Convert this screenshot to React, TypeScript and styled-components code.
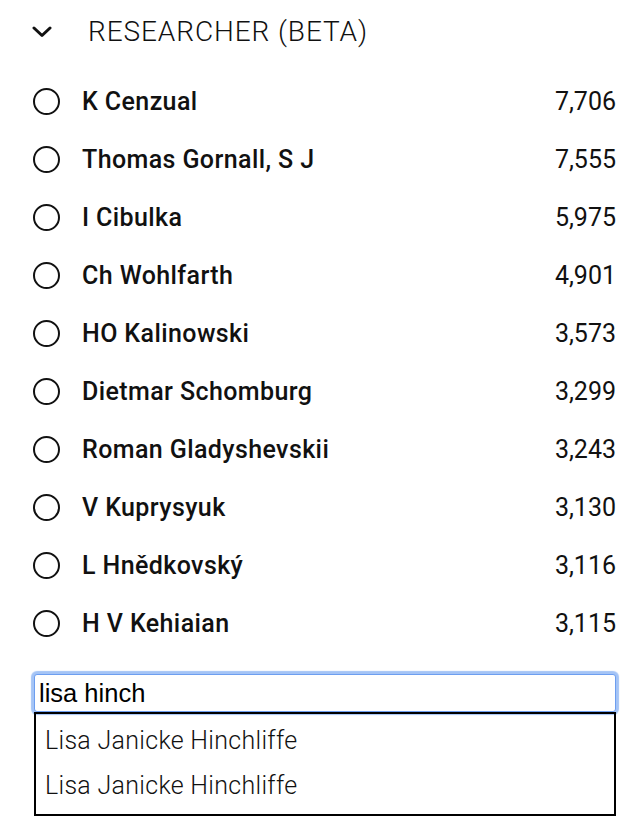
import React from 'react';
import styled, { createGlobalStyle } from 'styled-components';

const GlobalStyle = createGlobalStyle`
    body {
        margin: 0;
        background: #ffffff;
        font-family: Roboto, "Noto Sans", sans-serif;
    }
`;

const researchers = [
    { name: 'K Cenzual', count: '7,706' },
    { name: 'Thomas Gornall, S J', count: '7,555' },
    { name: 'I Cibulka', count: '5,975' },
    { name: 'Ch Wohlfarth', count: '4,901' },
    { name: 'HO Kalinowski', count: '3,573' },
    { name: 'Dietmar Schomburg', count: '3,299' },
    { name: 'Roman Gladyshevskii', count: '3,243' },
    { name: 'V Kuprysyuk', count: '3,130' },
    { name: 'L Hnědkovský', count: '3,116' },
    { name: 'H V Kehiaian', count: '3,115' },
];

const suggestions = ['Lisa Janicke Hinchliffe', 'Lisa Janicke Hinchliffe'];

const Chevron = () => (
    <svg width="20" height="12" viewBox="0 0 20 12">
        <path d="M2 2 L10 9.5 L18 2" fill="none" stroke="#111" strokeWidth="3" strokeLinecap="round" strokeLinejoin="round" />
    </svg>
);

const App: React.FC = () => {
    return (
        <Panel>
            <GlobalStyle />
            <Header>
                <ChevronBox>
                    <Chevron />
                </ChevronBox>
                <Title>RESEARCHER (BETA)</Title>
            </Header>
            <List>
                {researchers.map((r) => (
                    <Row key={r.name}>
                        <Radio />
                        <Name>{r.name}</Name>
                        <Count>{r.count}</Count>
                    </Row>
                ))}
            </List>
            <SearchBox>
                <SearchInput defaultValue="lisa hinch" />
                <Suggestions>
                    {suggestions.map((s, i) => (
                        <Suggestion key={i}>{s}</Suggestion>
                    ))}
                </Suggestions>
            </SearchBox>
        </Panel>
    );
};

const Panel = styled.div`
    display: flex;
    flex-direction: column;
    padding: 8px 28px 0 32px;
`;

const Header = styled.div`
    display: flex;
    align-items: center;
    height: 46px;
`;

const ChevronBox = styled.div`
    display: flex;
    width: 56px;
    margin-top: 2px;
`;

const Title = styled.span`
    font-size: 28px;
    font-weight: 300;
    letter-spacing: 0.9px;
    color: #111;
`;

const List = styled.div`
    display: flex;
    flex-direction: column;
    margin-top: 18px;
`;

const Row = styled.div`
    display: flex;
    align-items: center;
    height: 58px;
`;

const Radio = styled.span`
    width: 23px;
    height: 23px;
    border: 2px solid #111;
    border-radius: 50%;
    margin-left: 1px;
    flex-shrink: 0;
`;

const Name = styled.span`
    margin-left: 22px;
    font-size: 25px;
    font-weight: 500;
    letter-spacing: 0.4px;
    color: #111;
    flex: 1;
`;

const Count = styled.span`
    font-size: 25px;
    color: #111;
`;

const SearchBox = styled.div`
    display: flex;
    flex-direction: column;
    margin-top: 22px;
    padding-left: 2px;
`;

const SearchInput = styled.input`
    box-sizing: border-box;
    width: 100%;
    height: 38px;
    margin: 0;
    padding: 0 4px;
    font-family: "Liberation Sans", Arial, sans-serif;
    font-size: 25.5px;
    color: #000;
    border: 1px solid #6d9ef0;
    border-radius: 3px;
    outline: none;
    box-shadow: 0 0 1px 3px #a4c4f6;
`;

const Suggestions = styled.div`
    display: flex;
    flex-direction: column;
    border: 2px solid #000;
    padding: 4px 0 6px;
`;

const Suggestion = styled.div`
    height: 45px;
    display: flex;
    align-items: center;
    padding-left: 9px;
    font-size: 25px;
    font-weight: 300;
    letter-spacing: 0.3px;
    color: #111;
`;

export default App;
